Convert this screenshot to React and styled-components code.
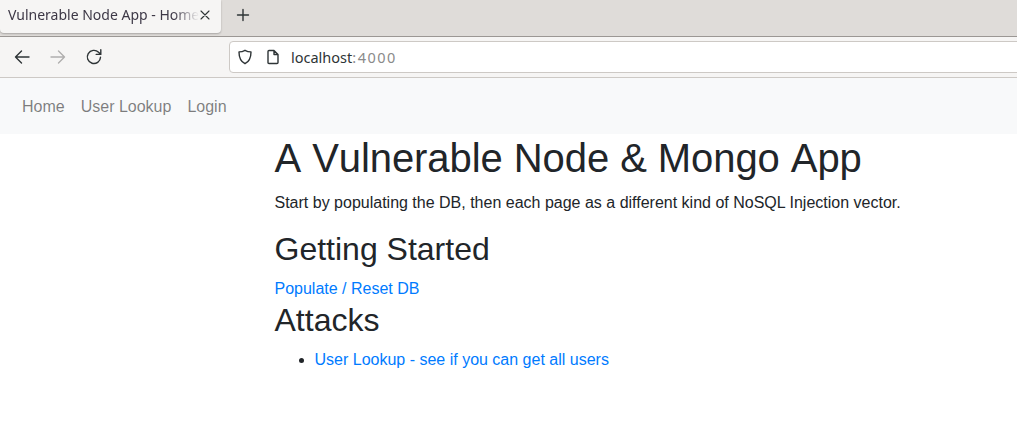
import React from "react";
import styled, { createGlobalStyle } from "styled-components";

const Global = createGlobalStyle`
  html, body { margin: 0; padding: 0; background: #fff; }
  body { font-family: "Liberation Sans", Arial, sans-serif; font-size: 16px; line-height: 1.5; color: #212529; overflow: hidden; }
  * { box-sizing: border-box; }
`;

const Page = styled.div`
  width: 1017px;
  height: 448px;
  overflow: hidden;
`;

const TabStrip = styled.div`
  height: 37px;
  background: #dfdcd9;
  border-bottom: 1px solid #9b9794;
  display: flex;
  align-items: flex-start;
`;

const Tab = styled.div`
  width: 221px;
  height: 33px;
  background: #f6f5f4;
  border-radius: 0 0 4px 4px;
  box-shadow: 0 1px 2px rgba(0, 0, 0, 0.25);
  padding-left: 8px;
  display: flex;
  align-items: flex-start;
  position: relative;
`;

const TabTitle = styled.span`
  font-family: "Noto Sans", sans-serif;
  font-size: 14px;
  line-height: 30px;
  color: #3d3846;
  white-space: nowrap;
  width: 191px;
  overflow: hidden;
  -webkit-mask-image: linear-gradient(to right, #000 165px, transparent 191px);
  mask-image: linear-gradient(to right, #000 165px, transparent 191px);
`;

const TabClose = styled.svg`
  position: absolute;
  left: 199px;
  top: 9px;
  width: 12px;
  height: 12px;
`;

const NewTab = styled.svg`
  width: 16px;
  height: 16px;
  margin: 7px 0 0 14px;
`;

const Toolbar = styled.div`
  height: 41px;
  background: #f6f5f4;
  border-bottom: 1px solid #cdc9c5;
  display: flex;
  align-items: center;
  padding-left: 13px;
`;

const NavIcon = styled.svg`
  width: 18px;
  height: 18px;
  margin-right: ${(p) => p.$gap}px;
  flex: none;
`;

const UrlBar = styled.div`
  flex: 1;
  height: 32px;
  margin-top: -1px;
  margin-left: 126px;
  margin-right: -10px;
  background: #fff;
  border: 1px solid #cdc9c5;
  border-radius: 4px;
  display: flex;
  align-items: center;
  padding-left: 7px;
`;

const UrlIcon = styled.svg`
  width: 16px;
  height: 16px;
  margin-right: ${(p) => p.$gap}px;
  flex: none;
`;

const Host = styled.span`
  font-family: "Noto Sans", sans-serif;
  font-size: 14.5px;
  padding-top: 2px;
  color: #2e3436;
`;

const Port = styled.span`
  font-family: "Noto Sans", sans-serif;
  font-size: 14.5px;
  letter-spacing: 1.5px;
  padding-top: 2px;
  color: #8a8a8a;
`;

const Navbar = styled.nav`
  height: 56px;
  background: #f8f9fa;
  padding: 9px 14px 7px;
  display: flex;
  align-items: center;
`;

const NavLink = styled.a`
  padding: 8px;
  color: rgba(0, 0, 0, 0.5);
  text-decoration: none;
`;

const Content = styled.main`
  padding-left: 274.5px;
`;

const H1 = styled.h1`
  margin: 0 0 8px;
  font-size: 40px;
  font-weight: 500;
  line-height: 1.2;
  font-kerning: none;
  letter-spacing: -0.07px;
`;

const H2 = styled.h2`
  margin: 0 0 8px;
  font-size: 32px;
  font-weight: 500;
  line-height: 1.2;
  font-kerning: none;
`;

const P = styled.p`
  margin: 0 0 15px;
  padding-top: 1px;
`;

const Link = styled.a`
  color: #007bff;
  text-decoration: none;
`;

const LinkRow = styled.div`
  padding-top: 1px;
`;

const List = styled.ul`
  margin: 0;
  padding-left: 40px;
`;

const Stroke = { fill: "none", stroke: "#2e3436", strokeWidth: 1.4, strokeLinecap: "round", strokeLinejoin: "round" };

export default function App() {
  return (
    <Page>
      <Global />
      <TabStrip>
        <Tab>
          <TabTitle>Vulnerable Node App - Home</TabTitle>
          <TabClose viewBox="0 0 12 12">
            <path d="M2 2l8 8M10 2l-8 8" {...Stroke} strokeWidth="1.1" />
          </TabClose>
        </Tab>
        <NewTab viewBox="0 0 16 16">
          <path d="M8 2.5v11M2.5 8h11" {...Stroke} />
        </NewTab>
      </TabStrip>
      <Toolbar>
        <NavIcon viewBox="0 0 18 18" $gap={18}>
          <path d="M16 9H2.5M8.5 3l-6 6 6 6" {...Stroke} />
        </NavIcon>
        <NavIcon viewBox="0 0 18 18" $gap={18}>
          <path d="M2 9h13.5M9.5 3l6 6-6 6" {...Stroke} stroke="#b0afae" />
        </NavIcon>
        <NavIcon viewBox="0 0 18 18" $gap={0}>
          <path d="M15.5 9.2A6.6 6.6 0 1 1 13.6 4.3L15.6 6.2M15.8 1.8v4.6h-4.6" {...Stroke} />
        </NavIcon>
        <UrlBar>
          <UrlIcon viewBox="0 0 16 16" $gap={12}>
            <path d="M8 1.3c2 1.2 4 1.6 6 1.6 0 5.4-1.6 9.5-6 11.8C3.6 12.4 2 8.300 2 2.900c2 0 4-.4 6-1.600z" {...Stroke} />
          </UrlIcon>
          <UrlIcon viewBox="0 0 16 16" $gap={10}>
            <path d="M3 2.500c0-.6.4-1 1-1h5l4 4v8c0 .6-.4 1-1 1H4c-.6 0-1-.4-1-1zM9 1.500v4h4" {...Stroke} />
          </UrlIcon>
          <Host>localhost</Host>
          <Port>:4000</Port>
        </UrlBar>
      </Toolbar>
      <Navbar>
        <NavLink>Home</NavLink>
        <NavLink>User Lookup</NavLink>
        <NavLink>Login</NavLink>
      </Navbar>
      <Content>
        <H1>A Vulnerable Node &amp; Mongo App</H1>
        <P>Start by populating the DB, then each page as a different kind of NoSQL Injection vector.</P>
        <H2>Getting Started</H2>
        <LinkRow>
          <Link>Populate / Reset DB</Link>
        </LinkRow>
        <H2>Attacks</H2>
        <List>
          <li>
            <Link>User Lookup - see if you can get all users</Link>
          </li>
        </List>
      </Content>
    </Page>
  );
}
